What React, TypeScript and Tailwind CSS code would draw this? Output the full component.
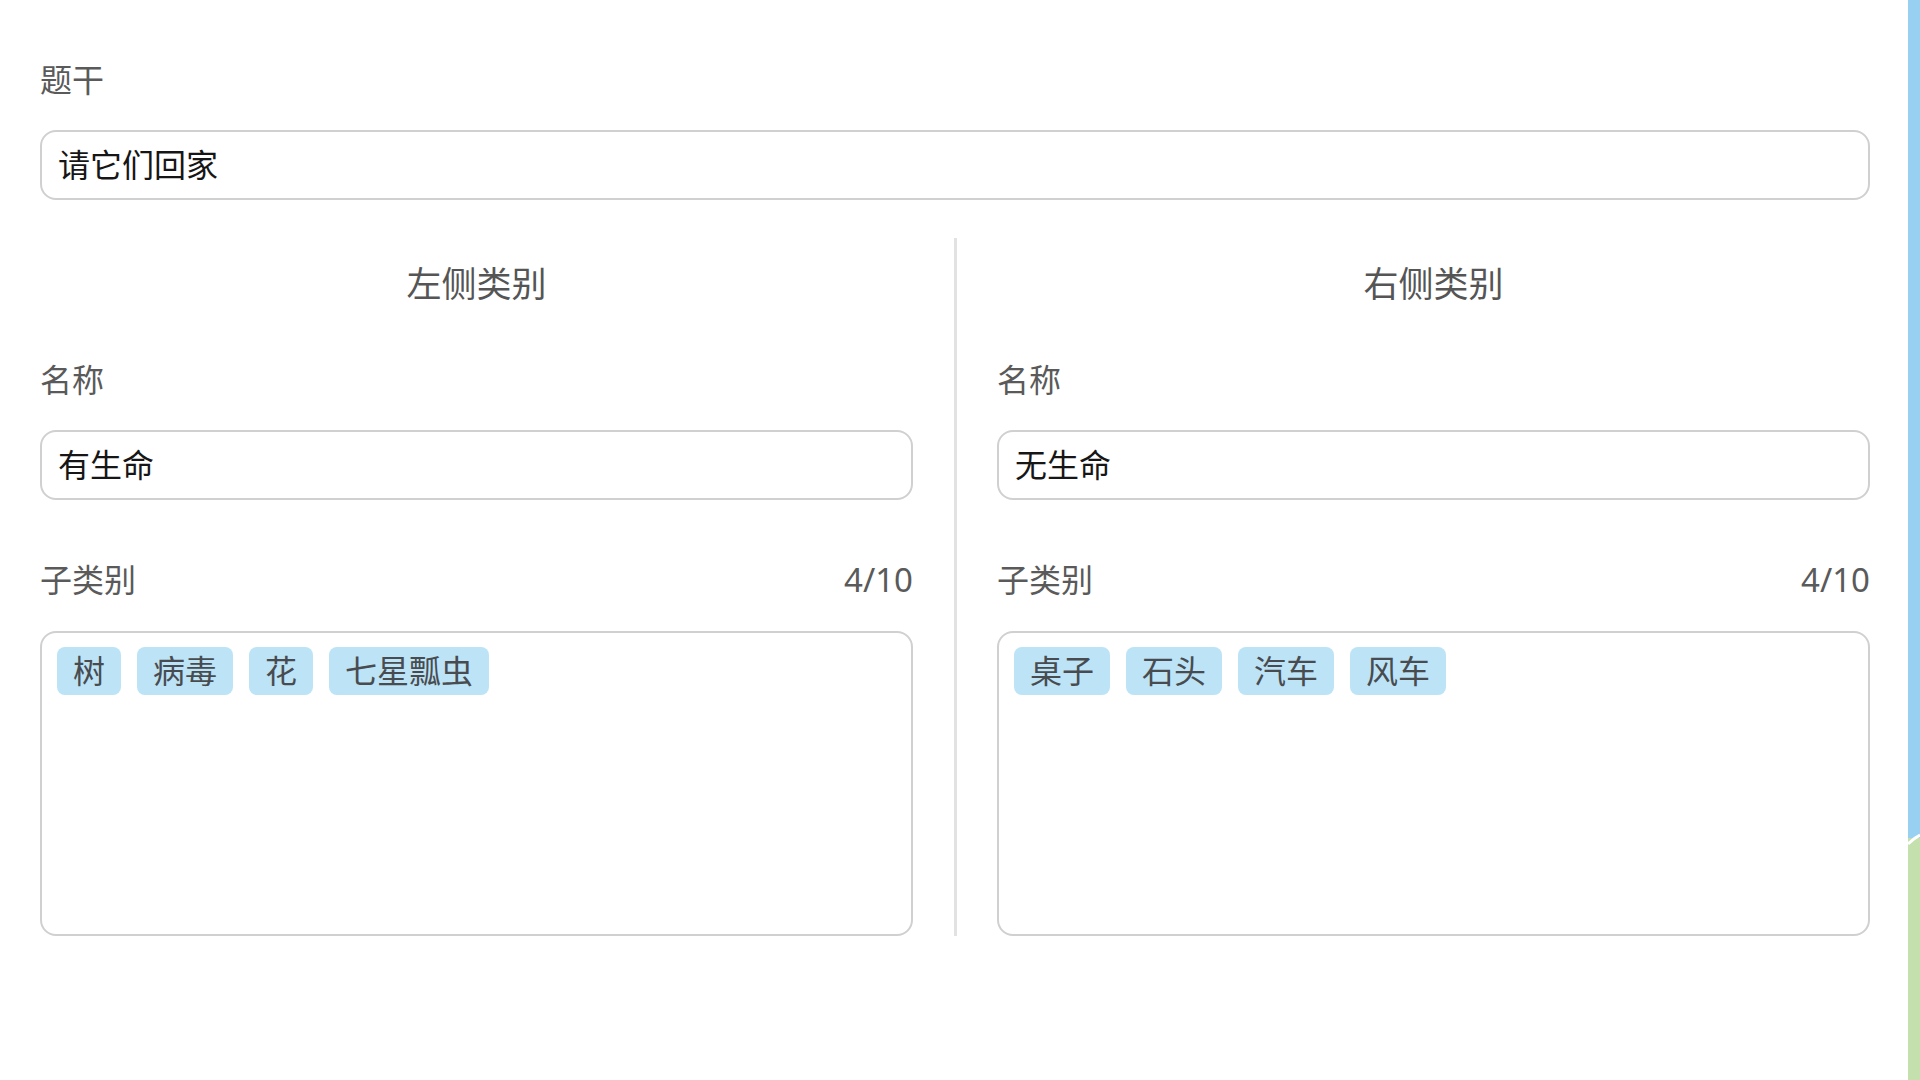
import React from "react";

const FONT = { fontFamily: '"Noto Sans", "Noto Sans CJK SC", sans-serif' };

function Tag({ text }: { text: string }) {
  return (
    <div className="h-[48px] px-[16px] rounded-[8px] bg-[#bde3f6] text-[#484c50] text-[32px] leading-[48px] flex items-center">
      {text}
    </div>
  );
}

function Column({ title, name, tags }: { title: string; name: string; tags: string[] }) {
  return (
    <div className="flex flex-col">
      <div className="mt-[26px] h-[40px] leading-[40px] text-center text-[35px] text-[#555555]">{title}</div>
      <div className="mt-[56px] h-[40px] leading-[40px] text-[32px] text-[#5a5a5a]">名称</div>
      <div className="mt-[30px] h-[70px] border-2 border-[#d0d0d0] rounded-[16px] px-4 flex items-center text-[32px] text-[#161616]">
        {name}
      </div>
      <div className="mt-[60px] h-[40px] leading-[40px] flex justify-between text-[32px] text-[#5a5a5a]">
        <span>子类别</span>
        <span className="text-[33px]">4/10</span>
      </div>
      <div className="mt-[31px] h-[305px] border-2 border-[#d0d0d0] rounded-[16px] pt-[14px] px-[15px]">
        <div className="flex flex-wrap gap-4">
          {tags.map((t) => (
            <Tag key={t} text={t} />
          ))}
        </div>
      </div>
    </div>
  );
}

export default function App() {
  return (
    <div className="w-[1920px] h-[1080px] bg-white flex overflow-hidden" style={FONT}>
      <div className="flex-1 pl-10 pr-[38px] pt-[60px]">
        <div className="h-[40px] leading-[40px] text-[32px] text-[#5a5a5a]">题干</div>
        <div className="mt-[30px] h-[70px] border-2 border-[#d0d0d0] rounded-[16px] px-4 flex items-center text-[32px] text-[#161616]">
          请它们回家
        </div>
        <div className="mt-[38px] grid grid-cols-[873px_84px_873px]">
          <Column title="左侧类别" name="有生命" tags={["树", "病毒", "花", "七星瓢虫"]} />
          <div className="flex justify-center">
            <div className="w-[3px] bg-[#e2e2e2]" />
          </div>
          <Column title="右侧类别" name="无生命" tags={["桌子", "石头", "汽车", "风车"]} />
        </div>
      </div>
      <div className="w-[12px] h-full relative bg-[#c3e0ad]">
        <div className="absolute left-0 top-0 w-full h-[838px] bg-[#98d0f1]" />
        <svg className="absolute left-0 top-[826px]" width="12" height="24" viewBox="0 0 12 24">
          <path d="M0 18 Q6 12 12 9" stroke="#ffffff" strokeWidth="3" fill="none" />
        </svg>
      </div>
    </div>
  );
}
